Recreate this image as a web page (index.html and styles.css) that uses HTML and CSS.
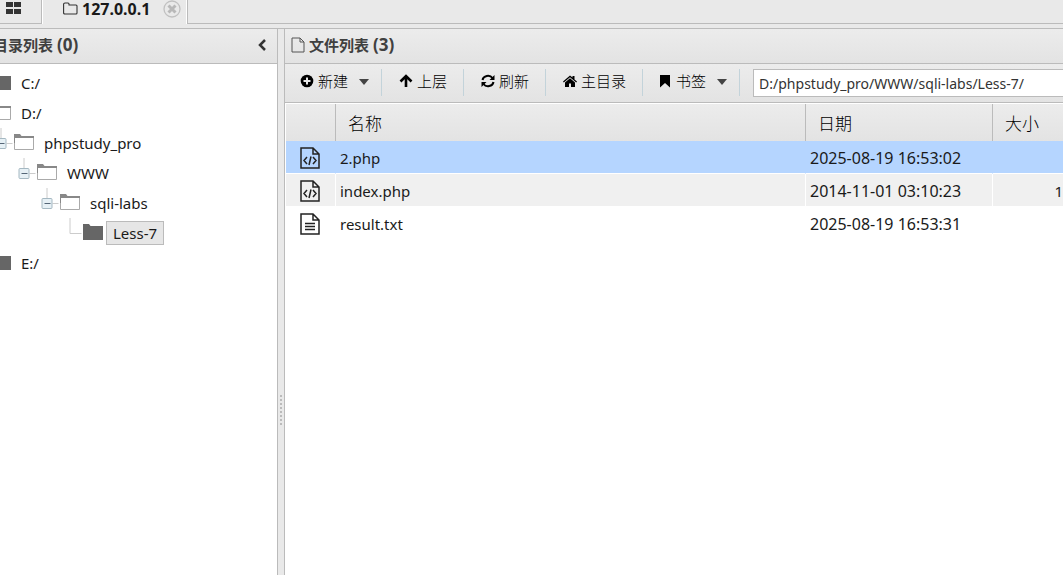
FILE: index.html
```html
<!DOCTYPE html>
<html lang="zh-CN">
<head>
<meta charset="utf-8">
<title>127.0.0.1</title>
<link rel="stylesheet" href="styles.css">
</head>
<body>
<svg class="defs" aria-hidden="true">
  <symbol id="folder" viewBox="0 0 20 16"><path d="M0 0h6l1.500 2H20v14H0z" fill="#666"/></symbol>
  <symbol id="folder-open" viewBox="0 0 20 16"><path d="M.5 15.500V3.500h19v12z" fill="#fff" stroke="#aaa"/><path d="M0 0h6l1.500 2H20v2H1V9H0z" fill="#888"/></symbol>
  <symbol id="minus" viewBox="0 0 18 30"><path d="M5.500 0v10M11 15.500h6" stroke="#ccc"/><rect x=".5" y="10.500" width="10" height="10" rx="1" fill="#e6f0f5" stroke="#a5b8c2"/><path d="M3 15.500h6" stroke="#567"/></symbol>
  <symbol id="code" viewBox="0 0 20 24"><path d="M1 2h12l6 6v14H1zM13 2v6h6M7 11l-3 3.500L7 18M13 11l3 3.500-3 3.500M11 10.500L9 19" fill="none" stroke="#222" stroke-width="1.500"/></symbol>
  <symbol id="caret" viewBox="0 0 10 6"><path d="M0 0h10L5 6z" fill="#444"/></symbol>
</svg>
<div class="app">
  <nav class="tabs">
    <button class="tab home" aria-label="主页"><svg width="15" height="12" viewBox="0 0 15 12"><path d="M0 0h7v5H0zM8 0h7v5H8zM0 7h7v5H0zM8 7h7v5H8z" fill="#333"/></svg></button>
    <div class="tab active">
      <svg width="15" height="13" viewBox="0 0 15 13"><path d="M.6 11V2Q.6 1 2 1h3q1 0 1 1v1h7q1 0 1 1v7q0 1-1 1H2Q.6 12 .6 11z" fill="none" stroke="#333" stroke-width="1.100"/></svg>
      <span>127.0.0.1</span>
      <button class="close" aria-label="关闭"><svg width="18" height="18" viewBox="0 0 18 18"><circle cx="9" cy="9" r="8" fill="none" stroke="#c0c0c0" stroke-width="1.300"/><path d="M5.500 5.500l7 7m0-7l-7 7" stroke="#b8b8b8" stroke-width="3"/></svg></button>
    </div>
    <div class="tab-fill"></div>
  </nav>
  <main class="panels">
    <aside class="side">
      <header class="title"><span>目录列表 <b>(0)</b></span>
        <button aria-label="折叠"><svg width="9" height="12" viewBox="0 0 9 12"><path d="M7 1L2 6l5 5" fill="none" stroke="#333" stroke-width="2.500"/></svg></button></header>
      <ul class="tree">
        <li><svg class="fold"><use href="#folder"/></svg><span>C:/</span></li>
        <li><svg class="fold"><use href="#folder-open"/></svg><span>D:/</span></li>
        <li class="l1"><svg class="elbow"><use href="#minus"/></svg><svg class="fold"><use href="#folder-open"/></svg><span>phpstudy_pro</span></li>
        <li class="l2"><svg class="elbow"><use href="#minus"/></svg><svg class="fold"><use href="#folder-open"/></svg><span>WWW</span></li>
        <li class="l3"><svg class="elbow"><use href="#minus"/></svg><svg class="fold"><use href="#folder-open"/></svg><span>sqli-labs</span></li>
        <li class="l4"><svg class="elbow" viewBox="0 0 18 30"><path d="M5.500 0v15.500H17" fill="none" stroke="#ccc"/></svg><svg class="fold"><use href="#folder"/></svg><span class="selected">Less-7</span></li>
        <li><svg class="fold"><use href="#folder"/></svg><span>E:/</span></li>
      </ul>
    </aside>
    <div class="splitter"><i></i></div>
    <section class="files">
      <header class="title"><svg width="14" height="16" viewBox="0 0 14 16"><path d="M1 1h8l4 4v10H1zM9 1v4h4" fill="none" stroke="#555"/></svg><span>文件列表 <b>(3)</b></span></header>
      <div class="toolbar">
        <button><svg width="14" height="14" viewBox="0 0 14 14"><circle cx="7" cy="7" r="6.300"/><path d="M7 3.500v7M3.500 7h7" stroke="#e7e7e7" stroke-width="2"/></svg>新建<svg class="caret"><use href="#caret"/></svg></button>
        <button><svg width="14" height="14" viewBox="0 0 14 14"><path d="M7 13V2M1.500 7.500L7 2l5.500 5.500" fill="none" stroke="#000" stroke-width="2.600"/></svg>上层</button>
        <button><svg width="14" height="14" viewBox="0 0 14 14"><path d="M1.500 6a5.500 5 0 0 1 10-2M12.500 8a5.500 5 0 0 1-10 2" fill="none" stroke="#000" stroke-width="2"/><path d="M13.500 1v5h-5zM.5 13V8h5z"/></svg>刷新</button>
        <button><svg width="14" height="14" viewBox="0 0 14 14"><path d="M0 7.500L7 1.500l2.500 2V2h2v3.500L14 7.500l-.8.900L7 3.200.8 8.400z"/><path d="M2 8.400l5-4.200 5 4.200V13H8V9.500H6V13H2z"/></svg>主目录</button>
        <button><svg width="12" height="14" viewBox="1 0 12 14"><path d="M1 1h10v12.500L6 9l-5 4.500z"/></svg>书签<svg class="caret"><use href="#caret"/></svg></button>
        <input type="text" aria-label="路径" value="D:/phpstudy_pro/WWW/sqli-labs/Less-7/">
      </div>
      <table>
        <colgroup><col class="c-icon"><col><col class="c-date"><col class="c-size"></colgroup>
        <thead><tr><th></th><th>名称</th><th>日期</th><th>大小</th></tr></thead>
        <tbody>
          <tr class="picked"><td><svg class="doc"><use href="#code"/></svg></td><td>2.php</td><td>2025-08-19 16:53:02</td><td></td></tr>
          <tr class="alt"><td><svg class="doc"><use href="#code"/></svg></td><td>index.php</td><td>2014-11-01 03:10:23</td><td>1</td></tr>
          <tr><td><svg class="doc" viewBox="0 0 20 24"><path d="M1 2h12l6 6v14H1zM13 2v6h6M5 11.500h10M5 14.500h10M5 17.500h10" fill="none" stroke="#222" stroke-width="1.500"/></svg></td><td>result.txt</td><td>2025-08-19 16:53:31</td><td></td></tr>
        </tbody>
      </table>
    </section>
  </main>
</div>
</body>
</html>
```
FILE: styles.css
```css
* { box-sizing: border-box; }
body {
  margin: 0;
  overflow: hidden;
  background: #e9e9e9;
  color: #1a1a1a;
  font: 16px/20px "Noto Sans", "Noto Sans CJK SC", sans-serif;
}
svg { display: block; flex: none; }
button { border: 0; padding: 0; background: none; font: inherit; color: inherit; }
.defs { position: absolute; width: 0; height: 0; }
.app { display: flex; flex-direction: column; height: 100vh; margin-left: -10px; }

.tabs { display: flex; height: 24px; }
.tab { display: flex; align-items: flex-start; }
.home { width: 52px; padding: 2px 0 0 16px; border-right: 1px solid #bbb; border-bottom: 1px solid #bbb; }
.active { gap: 4px; width: 145px; padding-left: 20px; border-left: 1px solid #fff; border-right: 1px solid #fff; font-weight: bold; line-height: 18px; }
.active > svg { margin-top: 2px; }
.close { margin-left: 9px; }
.tab-fill { flex: 1; border-left: 1px solid #bbb; border-bottom: 1px solid #bbb; }

.panels { display: flex; flex: 1; margin-top: 4px; border-top: 1px solid #bbb; }
.side { width: 288px; border-right: 1px solid #bbb; background: #fff; }
.title {
  display: flex;
  align-items: center;
  gap: 4px;
  height: 35px;
  padding-bottom: 2px;
  border-bottom: 1px solid #bbb;
  background: linear-gradient(#ececec, #e3e3e3);
  color: #404040;
  font-size: 15px;
  font-weight: bold;
}
.title b { font-size: 17px; font-weight: 700; }
.side .title { justify-content: space-between; padding: 0 10px 2px 3px; }
.files .title { padding-left: 6px; }

.tree { margin: 0; padding: 4px 0 0; list-style: none; }
.tree li { display: flex; align-items: center; height: 30px; padding-left: 1px; }
.tree .l1 { padding-left: 5px; }
.tree .l2 { padding-left: 28px; }
.tree .l3 { padding-left: 51px; }
.tree .l4 { padding-left: 74px; }
.tree span { margin-left: 3px; padding: 0 6px; border: 1px solid transparent; line-height: 22px; font-size: 15px; }
.tree .selected { border-color: #bbb; background: #e6e6e6; }
.fold { width: 20px; height: 16px; margin-bottom: 2px; }
.elbow { width: 19px; height: 30px; }

.splitter { display: flex; align-items: center; justify-content: center; width: 6px; padding-top: 216px; }
.splitter i { width: 2px; height: 30px; background: repeating-linear-gradient(#bbb 0 2px, #e9e9e9 2px 4px); }

.files { display: flex; flex: 1; flex-direction: column; min-width: 0; border-left: 1px solid #bbb; background: #fff; }
.toolbar { display: flex; align-items: center; height: 39px; border-bottom: 1px solid #bbb; background: linear-gradient(#ececec, #e3e3e3); }
.toolbar button { display: flex; align-items: center; gap: 4px; height: 27px; margin-bottom: 2px; padding: 0 16px 2px 17px; border-right: 1px solid #c3d3da; color: #000; font-size: 15px; font-weight: 300; }
.toolbar button:first-child { padding-left: 15px; }
.toolbar button:has(.caret) { padding-right: 12px; }
.caret { width: 10px; height: 6px; margin: 2px 0 0 7px; }
.toolbar input { flex: 1; min-width: 0; height: 28px; margin: 0 -4px 0 13px; padding: 0 5px; border: 1px solid #bbb; background: #fff; color: #333; font: 14px/20px "Noto Sans", sans-serif; }

table { width: calc(100% - 1px); margin: 1px 0 0 1px; table-layout: fixed; border-collapse: separate; border-spacing: 0; }
.c-icon { width: 50px; }
.c-date { width: 187px; }
.c-size { width: 70px; }
th { height: 37px; padding: 2px 0 0 12px; border-right: 1px solid #bbb; background: linear-gradient(#ececec, #e3e3e3); color: #000; font-size: 17px; font-weight: 300; text-align: left; }
th:last-child { border-right: 0; }
td { height: 33px; padding: 2px 0 0 4px; border-right: 1px solid transparent; border-bottom: 1px solid #fff; font-size: 15px; white-space: nowrap; }
td:nth-child(3) { font-size: 16px; }
td:first-child { padding-left: 14px; }
td:last-child { padding: 2px 0 0; border-right: 0; text-align: right; }
.picked td { background: #b5d5ff; }
.alt td { background: #f0f0f0; border-right-color: #fff; }
.doc { width: 20px; height: 24px; }
```
